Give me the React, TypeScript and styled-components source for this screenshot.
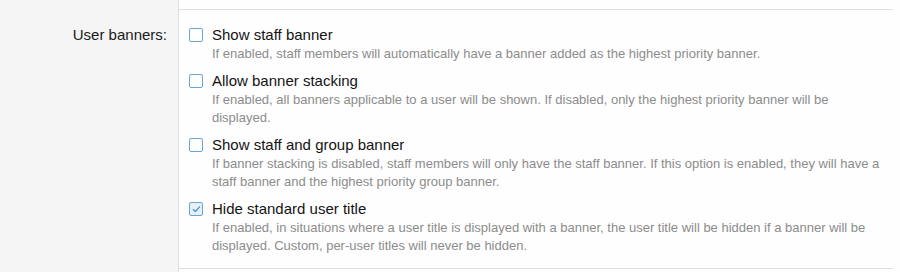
import React from 'react'
import styled, { createGlobalStyle } from 'styled-components'

const GlobalStyle = createGlobalStyle`
  html, body {
    margin: 0;
    padding: 0;
    background: #f5f5f5;
  }
  body {
    font-family: "Liberation Sans", Arial, sans-serif;
    color: #141414;
  }
`

const Form = styled.div`
  display: grid;
  grid-template-columns: 179px 1fr;
  min-height: 272px;
`

const LabelCell = styled.div`
  border-right: 1px solid #e0e0e0;
  padding-top: 25px;
  padding-right: 11px;
  text-align: right;
  font-size: 15px;
  line-height: 20px;
  color: #1a1a1a;
`

const FieldCell = styled.div`
  background: #fefefe;
  display: flex;
  flex-direction: column;
`

const Divider = styled.div<{ $tall?: boolean }>`
  height: ${p => (p.$tall ? 9 : 0)}px;
  margin-right: 7px;
  border-bottom: 1px solid #dedede;
`

const OptionList = styled.ul`
  list-style: none;
  margin: 0;
  padding: 15px 11px 13px 10px;
  display: flex;
  flex-direction: column;
  gap: 8px;
`

const Option = styled.li`
  display: grid;
  grid-template-columns: 14px 1fr;
  column-gap: 9px;
`

const Box = styled.span<{ $checked?: boolean }>`
  box-sizing: border-box;
  width: 14px;
  height: 14px;
  margin-top: 3px;
  border: 1.5px solid #6aa6d6;
  border-radius: 2px;
  background: ${p => (p.$checked ? '#e8f1f9' : '#ffffff')};
  display: flex;
  align-items: center;
  justify-content: center;
`

const Title = styled.div`
  font-size: 15px;
  line-height: 20px;
  color: #141414;
`

const Hint = styled.div`
  grid-column: 2;
  font-size: 13px;
  line-height: 18px;
  color: #8c8c8c;
`

type Item = { title: string; hint: string; checked?: boolean }

const items: Item[] = [
  {
    title: 'Show staff banner',
    hint: 'If enabled, staff members will automatically have a banner added as the highest priority banner.',
  },
  {
    title: 'Allow banner stacking',
    hint: 'If enabled, all banners applicable to a user will be shown. If disabled, only the highest priority banner will be displayed.',
  },
  {
    title: 'Show staff and group banner',
    hint: 'If banner stacking is disabled, staff members will only have the staff banner. If this option is enabled, they will have a staff banner and the highest priority group banner.',
  },
  {
    title: 'Hide standard user title',
    hint: 'If enabled, in situations where a user title is displayed with a banner, the user title will be hidden if a banner will be displayed. Custom, per-user titles will never be hidden.',
    checked: true,
  },
]

const Check = () => (
  <svg width="9" height="8" viewBox="0 0 9 8">
    <path d="M1 4.2 L3.4 6.4 L8 1.4" fill="none" stroke="#4f97cf" strokeWidth="1.4" />
  </svg>
)

export default function App() {
  return (
    <>
      <GlobalStyle />
      <Form>
        <LabelCell>User banners:</LabelCell>
        <FieldCell>
          <Divider $tall />
          <OptionList>
            {items.map(it => (
              <Option key={it.title}>
                <Box $checked={it.checked}>{it.checked && <Check />}</Box>
                <Title>{it.title}</Title>
                <Hint>{it.hint}</Hint>
              </Option>
            ))}
          </OptionList>
          <Divider />
        </FieldCell>
      </Form>
    </>
  )
}
